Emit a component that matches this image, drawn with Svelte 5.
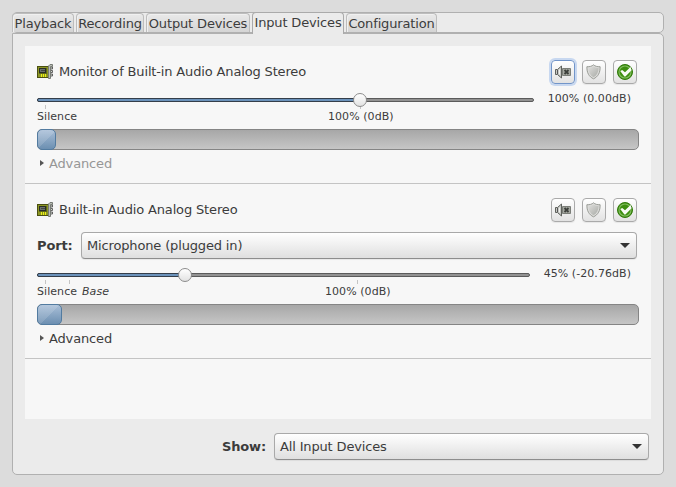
<script>
  const tabs = [
    { name: 'Playback', width: 62 },
    { name: 'Recording', width: 68 },
    { name: 'Output Devices', width: 104 },
    { name: 'Input Devices', width: 92, active: true },
    { name: 'Configuration', width: 91 }
  ];

  const devices = [
    {
      name: 'Monitor of Built-in Audio Analog Stereo',
      value: '100% (0.00dB)',
      track: 497,
      knob: 323,
      level: 19,
      focused: true,
      dim: true,
      marks: [
        { text: 'Silence', tick: 8, left: 0, width: 41 },
        { text: '100% (0dB)', tick: 323, left: 291, width: 66 }
      ]
    },
    {
      name: 'Built-in Audio Analog Stereo',
      value: '45% (-20.76dB)',
      port: 'Microphone (plugged in)',
      track: 493,
      knob: 148,
      level: 25,
      marks: [
        { text: 'Silence', tick: 8, left: 0, width: 41 },
        { text: 'Base', tick: 32, left: 45, width: 28, italic: true },
        { text: '100% (0dB)', tick: 320, left: 288, width: 66 }
      ]
    }
  ];
</script>

{#snippet combo(label)}
  <div class="combo">
    <span>{label}</span>
    <svg width="10" height="5" viewBox="0 0 10 5"><path d="M0 0H10L5 5Z" fill="#333" /></svg>
  </div>
{/snippet}

<div class="window">
  <div class="tabs">
    {#each tabs as tab}
      <div class="tab" class:active={tab.active} style="width: {tab.width}px">{tab.name}</div>
    {/each}
  </div>

  <div class="page">
    <div class="list">
      {#each devices as d}
        <section class="device">
          <div class="header">
            <svg class="card" width="17" height="16" viewBox="0 0 17 16">
              <path d="M0 2H12V14H0Z" fill="#4b5011" />
              <path d="M1 3H11V13H1Z" fill="#8c9624" />
              <path d="M2 4H10V10H2Z" fill="#5e6718" />
              <path d="M2 4H9V9H2Z" fill="#292d28" />
              <path d="M3 5H8V8H3Z" fill="#6a716c" />
              <path d="M4 6H8V7H4Z" fill="#414541" />
              <path d="M4.5 10V13M6.5 10V13M8.5 10V13" stroke="#eef116" />
              <path d="M14 3H15.5V5H14M14 6.5H15.5V8.5H14M14 10H15.5V12H14" fill="#d3d7cf" stroke="#555" stroke-width=".9" />
              <path d="M13.5 2.5V14.5H11.5V2L13 .5H15.5V2.5Z" fill="#babdb6" stroke="#777b75" />
            </svg>
            <span class="name">{d.name}</span>
            <div class="buttons">
              <button class:focused={d.focused} aria-label="Mute">
                <svg width="18" height="18" viewBox="0 0 18 18">
                  <path d="M1.5 6.5H3.5L7.5 3V15L3.5 11.5H1.5Z" fill="#c6c8c4" stroke="#5e615c" />
                  <path d="M3.5 7V11" stroke="#555" />
                  <path d="M5.5 6.5V11.5" stroke="#f1f1ef" />
                  <path d="M8.5 5.5H16.5V12.5H8.5Z" fill="#a4a7a0" stroke="#7b7e78" />
                  <path d="M10.5 7L14.5 11M14.5 7L10.5 11" stroke="#3c3f3a" stroke-width="1.8" />
                </svg>
              </button>
              <button aria-label="Lock channels">
                <svg width="18" height="18" viewBox="0 0 18 18">
                  <defs>
                    <linearGradient id="shield" x2="1" y2="1">
                      <stop stop-color="#dededc" /><stop offset="1" stop-color="#a9aba6" />
                    </linearGradient>
                  </defs>
                  <path d="M8.5 1.8C7 3.3 4.5 3.9 1.9 3.7C1.7 9.8 4 13.7 8.5 15.8C13 13.7 15.3 9.8 15.1 3.7C12.5 3.9 10 3.3 8.5 1.8Z" fill="#dddddb" stroke="#999c96" />
                  <path d="M8.5 3.6C7.1 4.6 5.3 5.1 3.4 5C3.5 9.3 5.1 12.4 8.5 14.3C11.9 12.4 13.5 9.3 13.6 5C11.7 5.1 9.9 4.6 8.5 3.6Z" fill="url(#shield)" />
                </svg>
              </button>
              <button aria-label="Set as fallback">
                <svg width="18" height="18" viewBox="0 0 18 18">
                  <circle cx="9" cy="9" r="7.5" fill="#3e8f10" stroke="#327a0b" />
                  <circle cx="9" cy="9" r="6" fill="none" stroke="#82bd60" stroke-width="1.1" />
                  <path d="M4.2 8L6.2 6.9L9 9.3L14.6 4L15.6 7.2L9.4 13.4H8.4Z" fill="#f7fbf4" />
                </svg>
              </button>
            </div>
          </div>

          {#if d.port}
            <div class="port"><b>Port:</b>{@render combo(d.port)}</div>
          {/if}

          <div class="volume">
            <div class="slider" style="width: {d.track}px">
              <div class="track"><div class="fill" style="width: {d.knob}px"></div></div>
              {#each d.marks as m}
                <i class="tick" style="left: {m.tick}px"></i>
                <span class="mark" class:italic={m.italic} style="left: {m.left}px; width: {m.width}px">{m.text}</span>
              {/each}
              <div class="knob" style="left: {d.knob - 7}px"></div>
            </div>
            <span class="value">{d.value}</span>
          </div>

          <div class="meter"><div class="level" style="width: {d.level}px"></div></div>

          <div class="advanced" class:dim={d.dim}>
            <svg width="4" height="6" viewBox="0 0 4 6"><path d="M0 0L4 3L0 6Z" fill="#555" /></svg>
            Advanced
          </div>
        </section>
      {/each}
    </div>

    <div class="show"><b>Show:</b>{@render combo('All Input Devices')}</div>
  </div>
</div>

<style>
  :global(body) {
    margin: 0;
    background: #dcdcdc;
  }
  .window {
    box-sizing: border-box;
    width: 676px;
    height: 487px;
    padding: 12px;
    background: #dcdcdc;
    font: 13px/16px "DejaVu Sans", sans-serif;
    letter-spacing: -0.15px;
    color: #3c3c3c;
    white-space: nowrap;
    overflow: hidden;
  }
  .tabs {
    box-sizing: border-box;
    width: 652px;
    height: 21px;
    display: flex;
    align-items: flex-end;
    gap: 2px;
    border: 1px solid #b0b0b0;
    border-radius: 5px;
    background: #ebebeb;
    padding-right: 2px;
  }
  .tab {
    box-sizing: border-box;
    height: 19px;
    flex: none;
    border: 1px solid #bdbdbd;
    border-bottom: 0;
    border-radius: 4px 4px 0 0;
    background: linear-gradient(#e9e9e9, #d5d5d5);
    box-shadow: inset 1px 1px #f0f0f0;
    line-height: 20px;
    text-align: center;
  }
  .tab:first-child {
    margin-left: -1px;
  }
  .tab.active {
    height: 22px;
    margin-bottom: -2px;
    border-color: #aaa;
    background: #ebebeb;
    line-height: 20px;
    position: relative;
    box-shadow: none;
  }
  .page {
    box-sizing: border-box;
    width: 652px;
    height: 442px;
    border: 1px solid #b0b0b0;
    border-radius: 0 5px 5px 5px;
    background: #ebebeb;
    padding: 12px 14px 0 12px;
  }
  .list {
    width: 626px;
    height: 373px;
    background: #f7f7f7;
  }
  .device {
    padding: 14px 12px 11px;
    border-bottom: 1px solid #c4c4c4;
  }
  .header {
    display: flex;
    align-items: center;
    height: 24px;
    padding-right: 2px;
  }
  .name {
    margin-left: 5px;
    flex: 1;
  }
  .buttons {
    display: flex;
    gap: 7px;
  }
  button {
    box-sizing: border-box;
    width: 24px;
    height: 24px;
    padding: 2px;
    border: 1px solid #aaa;
    border-radius: 4px;
    background: linear-gradient(#fff, #e2e2e2);
    box-shadow: 0 1px 1px #0001;
  }
  button svg {
    display: block;
  }
  button.focused {
    border-color: #7295c9;
    box-shadow: 0 0 0 2px #c8d8f0;
  }
  .port {
    display: flex;
    align-items: center;
    height: 27px;
    margin: 10px 2px 0 0;
  }
  .port b {
    width: 44px;
  }
  .combo {
    box-sizing: border-box;
    flex: 1;
    height: 27px;
    display: flex;
    align-items: center;
    justify-content: space-between;
    padding: 0 6px 0 5px;
    border: 1px solid #a9a9a9;
    border-bottom-color: #8d8d8d;
    border-radius: 4px;
    background: linear-gradient(#fff, #dfdfdf);
    box-shadow: 0 1px 1px #0001;
  }
  .volume {
    display: flex;
    justify-content: space-between;
    height: 31px;
    margin-top: 14px;
    padding-right: 8px;
    font-size: 11px;
    letter-spacing: 0.06px;
  }
  .slider {
    position: relative;
  }
  .track {
    box-sizing: border-box;
    height: 4px;
    border: 1px solid #5b5b5b;
    border-radius: 2px;
    background: #929292;
  }
  .fill {
    box-sizing: border-box;
    height: 4px;
    margin: -1px;
    border: 1px solid #343e4a;
    border-radius: 2px 0 0 2px;
    background: #6b92bb;
  }
  .knob {
    box-sizing: border-box;
    position: absolute;
    top: -5px;
    width: 14px;
    height: 14px;
    border: 1px solid #8c8c8c;
    border-radius: 50%;
    background: linear-gradient(#fff, #e2e2e2);
  }
  .tick {
    position: absolute;
    top: 7px;
    width: 1px;
    height: 4px;
    background: #c4c4c4;
  }
  .mark {
    position: absolute;
    top: 11px;
  }
  .italic {
    font-style: italic;
  }
  .value {
    margin-top: -7px;
  }
  .meter {
    box-sizing: border-box;
    height: 21px;
    border: 1px solid #858585;
    border-radius: 5px;
    background: linear-gradient(#a7a7a7, #c6c6c6);
  }
  .level {
    box-sizing: border-box;
    height: 21px;
    margin: -1px;
    border: 1px solid #527ba0;
    border-radius: 5px;
    background:
      linear-gradient(135deg, #fff2 50%, transparent 51%),
      linear-gradient(#a9bfd8, #6c8fb1);
  }
  .advanced {
    display: flex;
    align-items: center;
    gap: 5px;
    margin-top: 6px;
    padding-left: 3px;
  }
  .advanced svg {
    margin-bottom: 2px;
  }
  .advanced.dim {
    color: #969696;
  }
  .show {
    display: flex;
    align-items: center;
    width: 427px;
    margin: 14px 0 0 197px;
  }
  .show b {
    width: 52px;
  }
</style>
